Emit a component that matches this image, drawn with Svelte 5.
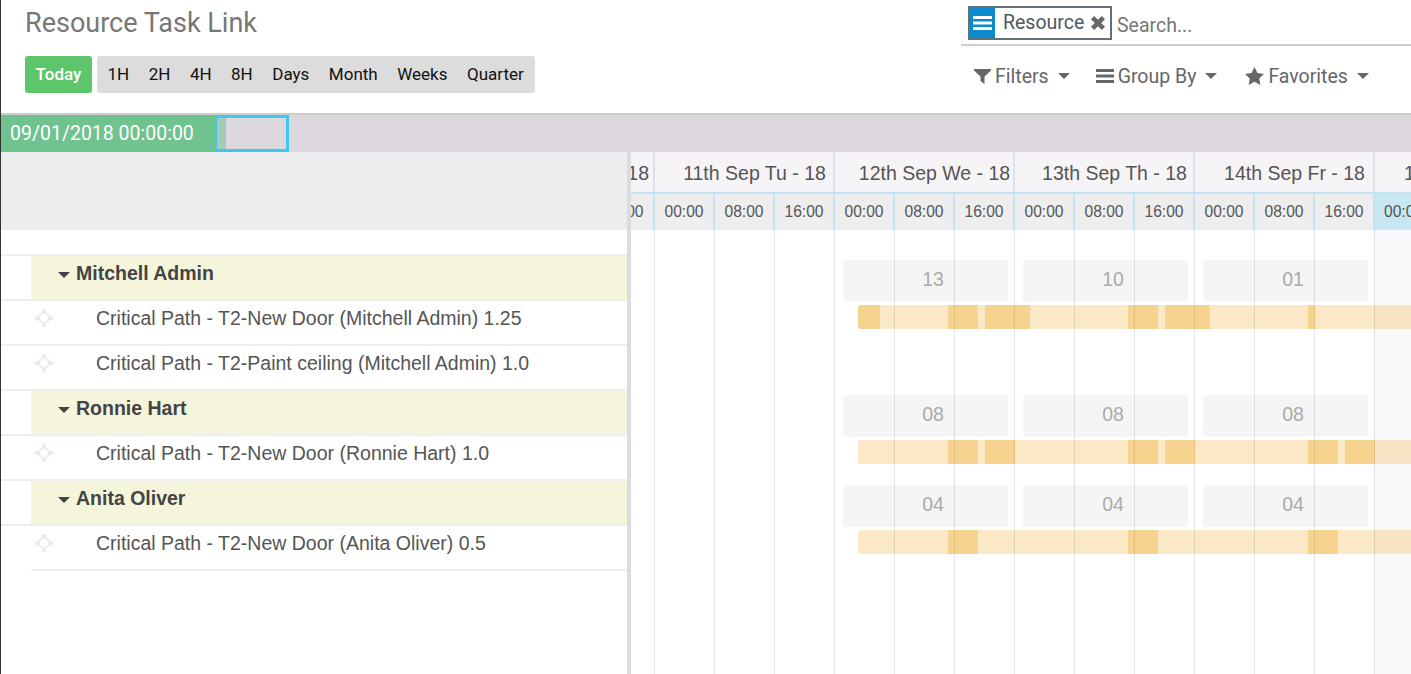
<script lang="ts">
    const scales = ["1H", "2H", "4H", "8H", "Days", "Month", "Weeks", "Quarter"];
    const days = [
        { label: "18", hours: ["00:00"], partial: true },
        { label: "11th Sep Tu - 18", hours: ["00:00", "08:00", "16:00"] },
        { label: "12th Sep We - 18", hours: ["00:00", "08:00", "16:00"] },
        { label: "13th Sep Th - 18", hours: ["00:00", "08:00", "16:00"] },
        { label: "14th Sep Fr - 18", hours: ["00:00", "08:00", "16:00"] },
    ];
    const chartLeft = 631;
    const gridLines = [654, 714, 774, 834, 894, 954, 1014, 1074, 1134, 1194, 1254, 1314, 1374];

    const rows = [
        { type: "group", name: "Mitchell Admin", totals: ["13", "10", "01"], segments: [[858, 880], [948, 978], [985, 1030], [1128, 1158], [1165, 1210], [1308, 1315]] },
        { type: "task", name: "Critical Path - T2-New Door (Mitchell Admin) 1.25" },
        { type: "task", name: "Critical Path - T2-Paint ceiling (Mitchell Admin) 1.0" },
        { type: "group", name: "Ronnie Hart", totals: ["08", "08", "08"], segments: [[948, 978], [985, 1015], [1128, 1158], [1165, 1195], [1308, 1338], [1345, 1375]] },
        { type: "task", name: "Critical Path - T2-New Door (Ronnie Hart) 1.0" },
        { type: "group", name: "Anita Oliver", totals: ["04", "04", "04"], segments: [[948, 978], [1128, 1158], [1308, 1338]] },
        { type: "task", name: "Critical Path - T2-New Door (Anita Oliver) 0.5" },
    ];
</script>

<div class="page">
    <header class="topbar">
        <div class="left">
            <h1>Resource Task Link</h1>
            <div class="scale-row">
                <button class="today">Today</button>
                <div class="scales">
                    {#each scales as s}
                        <span>{s}</span>
                    {/each}
                </div>
            </div>
        </div>
        <div class="right">
            <div class="searchbar">
                <div class="facet">
                    <span class="facet-icon">
                        <svg width="19" height="14" viewBox="0 0 19 14"><path d="M0 0h19v3H0zM0 5.500h19v3H0zM0 11h19v3H0z" fill="#fff"/></svg>
                    </span>
                    <span class="facet-label">Resource</span>
                    <svg class="facet-x" width="14" height="14" viewBox="0 0 14 14"><path d="M3.200 0 7 3.800 10.800 0 14 3.200 10.200 7 14 10.800 10.800 14 7 10.200 3.200 14 0 10.800 3.800 7 0 3.200z" fill="#666"/></svg>
                </div>
                <span class="placeholder">Search...</span>
            </div>
            <div class="menus">
                <span class="menu">
                    <svg width="17" height="16" viewBox="0 0 17 16"><path d="M0 1h17v1.500L10.500 8.600V16l-4-3V8.600L0 2.500z" fill="#666"/></svg>
                    Filters<i class="caret"></i>
                </span>
                <span class="menu">
                    <svg width="18" height="14" viewBox="0 0 18 14"><path d="M0 0h18v3H0zM0 5.500h18v3H0zM0 11h18v3H0z" fill="#666"/></svg>
                    Group By<i class="caret"></i>
                </span>
                <span class="menu favorites">
                    <svg width="19" height="18" viewBox="0 0 19 18"><path d="M9.500 0l2.900 6 6.600.9-4.800 4.600 1.200 6.500-5.900-3.200L3.600 18l1.200-6.500L0 6.900 6.600 6z" fill="#666"/></svg>
                    Favorites<i class="caret"></i>
                </span>
            </div>
        </div>
    </header>

    <div class="timeline">
        <div class="date">09/01/2018 00:00:00</div>
        <div class="viewport"><div class="viewport-fill"></div></div>
    </div>

    <div class="body">
        <div class="tree">
            <div class="tree-head"></div>
            <div class="tree-rows">
                {#each rows as row}
                    {#if row.type === "group"}
                        <div class="row group">
                            <div class="group-cell"><i class="caret dark"></i>{row.name}</div>
                        </div>
                    {:else}
                        <div class="row task">
                            <svg class="move" width="18" height="18" viewBox="0 0 18 18">
                                <circle cx="9" cy="9" r="5" fill="none" stroke="#ececec" stroke-width="2.200"/>
                                <path d="M7 0h4v4.500H7zM7 13.500h4V18H7zM0 7h4.500v4H0zM13.500 7H18v4h-4.500z" fill="#ececec"/>
                            </svg>
                            <span>{row.name}</span>
                        </div>
                    {/if}
                {/each}
                <div class="tree-end"></div>
            </div>
        </div>

        <div class="chart">
            <div class="chart-head">
                <div class="day-row">
                    {#each days as d}
                        <div class="day" class:stub={d.partial}>{d.label}</div>
                    {/each}
                    <div class="day next">15th Sep Sa - 18</div>
                </div>
                <div class="hour-row">
                    {#each days as d}
                        {#each d.hours as h}
                            <div class="hour" class:stub={d.partial}>{h}</div>
                        {/each}
                    {/each}
                    <div class="hour now">00:00</div>
                </div>
            </div>

            <div class="chart-rows">
                <div class="today-col"></div>
                {#each rows as row}
                    <div class="chart-row">
                        {#if row.type === "group"}
                            <div class="pills">
                                {#each row.totals as t}
                                    <div class="pill">{t}</div>
                                {/each}
                            </div>
                            <div class="bar">
                                {#each row.segments as [a, b]}
                                    <div class="seg" style="left: {a - 858}px; width: {b - a}px"></div>
                                {/each}
                            </div>
                        {/if}
                    </div>
                {/each}
                {#each gridLines as x}
                    <div class="line" style="left: {x - chartLeft}px"></div>
                {/each}
            </div>
        </div>
    </div>
</div>

<style>
    :global(body) {
        margin: 0;
        background: #fff;
    }

    .page {
        width: 1411px;
        height: 674px;
        overflow: hidden;
        box-sizing: border-box;
        border-left: 1px solid #333;
        font-family: Roboto, sans-serif;
        color: #4c4c4c;
    }

    .topbar {
        height: 113px;
        display: flex;
        justify-content: space-between;
        box-sizing: border-box;
    }

    .left {
        padding-left: 24px;
    }

    h1 {
        margin: 0;
        padding-top: 8px;
        font-size: 27px;
        line-height: 30px;
        font-weight: 400;
        color: #777;
    }

    .scale-row {
        display: flex;
        gap: 5px;
        margin-top: 18px;
    }

    .today {
        width: 67px;
        height: 37px;
        border: 0;
        border-radius: 3px;
        background: #5fc56b;
        color: #fff;
        font: 500 17px Roboto, sans-serif;
        padding: 0 0 2px;
    }

    .scales {
        height: 37px;
        box-sizing: border-box;
        display: flex;
        align-items: center;
        gap: 19.5px;
        padding: 0 11px 2px 10.5px;
        background: #dcdcdc;
        border-radius: 3px;
        font-size: 17px;
        color: #111;
    }

    .right {
        width: 450px;
        padding-top: 6px;
    }

    .searchbar {
        height: 38px;
        display: flex;
        border-bottom: 2px solid #ccc;
        padding-left: 7px;
    }

    .facet {
        width: 144px;
        height: 34px;
        box-sizing: border-box;
        border: 2px solid #667079;
        display: flex;
        align-items: center;
    }

    .facet-icon {
        width: 25px;
        height: 30px;
        background: #0a8bcb;
        display: flex;
        align-items: center;
        justify-content: center;
    }

    .facet-label {
        margin: 0 0 2px 8px;
        font-size: 19.5px;
        color: #4c5966;
    }

    .facet-x {
        margin-left: 7px;
    }

    .placeholder {
        margin: 8px 0 0 5px;
        font-size: 19.5px;
        color: #777;
    }

    .menus {
        display: flex;
        gap: 26px;
        margin-top: 18px;
        padding-left: 13px;
        font-size: 19.5px;
        color: #666;
    }

    .menu {
        display: flex;
        align-items: center;
        gap: 4px;
        height: 24px;
    }

    .menu.favorites {
        margin-left: 2px;
    }

    .caret {
        display: inline-block;
        width: 0;
        height: 0;
        margin-left: 5px;
        border-left: 6px solid transparent;
        border-right: 6px solid transparent;
        border-top: 6px solid #666;
    }

    .caret.dark {
        margin: 0 6px 0 27px;
        border-top-color: #444;
        vertical-align: 2px;
    }

    .timeline {
        height: 37px;
        border-top: 2px solid #ccc;
        background: #dcd8de;
        display: flex;
    }

    .date {
        width: 214px;
        box-sizing: border-box;
        padding-left: 9px;
        background: #70c28f;
        color: #fff;
        font-size: 19.5px;
        line-height: 37px;
    }

    .viewport {
        width: 74px;
        box-sizing: border-box;
        border: 3px solid #3cc8f0;
        border-left-width: 2px;
    }

    .viewport-fill {
        width: 9px;
        height: 100%;
        background: #a2ccb4;
    }

    .body {
        display: flex;
        height: 522px;
    }

    .tree {
        width: 626px;
        flex: none;
        border-right: 4px solid #dcdce0;
    }

    .tree-head {
        height: 78px;
        background: #ecedef;
    }

    .tree-rows {
        padding-top: 24px;
    }

    .row {
        height: 45px;
        box-sizing: border-box;
        border-top: 2px solid #eee;
        font-family: "Liberation Sans", sans-serif;
        font-size: 19.5px;
    }

    .group {
        padding-left: 30px;
    }

    .group-cell {
        height: 100%;
        background: #f5f5dc;
        font-weight: 700;
        color: #444;
        line-height: 34px;
    }

    .task {
        display: flex;
        color: #555;
        line-height: 34px;
    }

    .move {
        margin: 8px 0 0 34px;
        flex: none;
    }

    .task span {
        margin-left: 43px;
    }

    .tree-end {
        margin-left: 30px;
        border-top: 2px solid #eee;
    }

    .chart {
        flex: 1;
        min-width: 0;
        overflow: hidden;
    }

    .chart-head {
        height: 78px;
        font-family: "Liberation Sans", sans-serif;
        color: #555;
    }

    .day-row {
        display: flex;
        height: 40px;
        background: #f6f4f6;
        font-size: 19.5px;
        line-height: 42px;
        white-space: nowrap;
    }

    .day {
        flex: none;
        width: 180px;
        box-sizing: border-box;
        text-align: center;
        padding-left: 21px;
        border-right: 2px solid #d8e4ea;
        overflow: hidden;
    }

    .day.stub {
        width: 60px;
        margin-left: -36px;
        padding-left: 0;
        padding-right: 4px;
        text-align: right;
    }

    .day.next {
        border: 0;
        text-align: left;
        padding-left: 29px;
    }

    .hour-row {
        display: flex;
        height: 38px;
        box-sizing: border-box;
        border-top: 2px solid #c3e3f0;
        background: #eee;
        font-size: 15.6px;
        line-height: 36px;
        white-space: nowrap;
    }

    .hour {
        flex: none;
        width: 60px;
        box-sizing: border-box;
        text-align: center;
        border-right: 2px solid #c3e3f0;
        overflow: hidden;
    }

    .hour.stub {
        margin-left: -36px;
    }

    .hour.now {
        flex: 1;
        background: #c8e7f3;
        border: 0;
        text-align: left;
        padding-left: 9px;
    }

    .chart-rows {
        position: relative;
        height: 444px;
        padding-top: 25px;
        box-sizing: border-box;
    }

    .today-col {
        position: absolute;
        left: 743px;
        right: 0;
        top: 0;
        bottom: 0;
        background: #f8f9fb;
    }

    .chart-row {
        position: relative;
        height: 45px;
    }

    .pills {
        display: flex;
        gap: 15px;
        padding: 5px 0 0 212px;
    }

    .pill {
        width: 165px;
        height: 42px;
        box-sizing: border-box;
        padding-left: 15px;
        border-radius: 3px;
        background: #f5f5f5;
        color: #aaa;
        text-align: center;
        font-family: "Liberation Sans", sans-serif;
        font-size: 19.5px;
        line-height: 38px;
    }

    .bar {
        position: absolute;
        left: 227px;
        right: -20px;
        top: 50px;
        height: 24px;
        border-radius: 3px 0 0 3px;
        background: rgba(246, 200, 120, 0.42);
        overflow: hidden;
    }

    .seg {
        position: absolute;
        top: 0;
        bottom: 0;
        background: rgba(240, 180, 70, 0.42);
    }

    .line {
        position: absolute;
        top: 0;
        bottom: 0;
        width: 1px;
        background: rgba(0, 0, 0, 0.09);
    }
</style>
